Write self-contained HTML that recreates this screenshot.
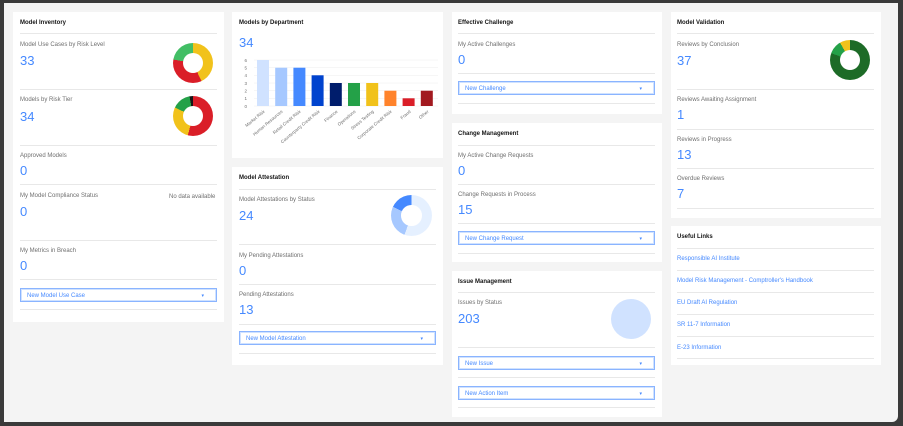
<!DOCTYPE html>
<html><head><meta charset="utf-8"><style>
*{margin:0;padding:0;box-sizing:border-box}
body{width:903px;height:426px;background:#3a3a3a;font-family:"Liberation Sans",sans-serif;position:relative;overflow:hidden}
#bg{position:absolute;left:4px;top:3px;width:894px;height:419px;background:#f4f4f4;border-radius:0 0 6px 0}
.c{position:absolute;background:#fff}
.t{position:absolute;font-size:6px;font-weight:bold;color:#161616}
.l{position:absolute;font-size:6px;color:#6f6f6f}
.n{position:absolute;font-size:13px;color:#4589ff;line-height:13px}
.h{position:absolute;height:1px;background:#e8e8e8}
.b{position:absolute;height:14px;border:1px solid #8ab4ff;box-shadow:0 0 0 1px #d0e2ff inset;font-size:6px;color:#4589ff;padding:4px 0 0 16px;line-height:6px}
.b:after{content:"▾";position:absolute;right:12px;top:4px;font-size:5px}
.d{position:absolute;border-radius:50%}
.d:after{content:"";position:absolute;left:25%;top:25%;width:50%;height:50%;border-radius:50%;background:#fff}
.a{position:absolute;font-size:6px;color:#4589ff}
</style></head><body>
<div id="bg"></div>

<!-- col1 -->
<div class="c" style="left:13px;top:12px;width:211px;height:310px"></div>
<div class="t" style="left:20px;top:20px">Model Inventory</div>
<div class="h" style="left:20px;top:33px;width:197px"></div>
<div class="l" style="left:20px;top:42px">Model Use Cases by Risk Level</div>
<div class="n" style="left:20px;top:54px">33</div>
<div class="d" style="left:173px;top:43px;width:40px;height:40px;background:conic-gradient(#f1c21b 0 155deg,#da1e28 155deg 280deg,#42be65 280deg 360deg)"></div>
<div class="h" style="left:20px;top:89px;width:197px"></div>
<div class="l" style="left:20px;top:97px">Models by Risk Tier</div>
<div class="n" style="left:20px;top:110px">34</div>
<div class="d" style="left:173px;top:96px;width:40px;height:40px;background:conic-gradient(#da1e28 0 195deg,#f1c21b 195deg 295deg,#24a148 295deg 350deg,#161616 350deg 360deg)"></div>
<div class="h" style="left:20px;top:145px;width:197px"></div>
<div class="l" style="left:20px;top:153px">Approved Models</div>
<div class="n" style="left:20px;top:164px">0</div>
<div class="h" style="left:20px;top:184px;width:197px"></div>
<div class="l" style="left:20px;top:193px">My Model Compliance Status</div>
<div class="l" style="left:169px;top:194px">No data available</div>
<div class="n" style="left:20px;top:205px">0</div>
<div class="h" style="left:20px;top:240px;width:197px"></div>
<div class="l" style="left:20px;top:248px">My Metrics in Breach</div>
<div class="n" style="left:20px;top:259px">0</div>
<div class="h" style="left:20px;top:279px;width:197px"></div>
<div class="b" style="left:20px;top:288px;width:197px;padding-left:6px">New Model Use Case</div>
<div class="h" style="left:20px;top:309px;width:197px"></div>

<!-- col2 -->
<div class="c" style="left:232px;top:12px;width:211px;height:146px"></div>
<div class="t" style="left:239px;top:20px">Models by Department</div>
<div class="n" style="left:239px;top:36px">34</div>
<svg style="position:absolute;left:232px;top:55px" width="211" height="100" font-family="Liberation Sans" font-size="4.5" fill="#6f6f6f">
<g stroke="#eee" stroke-width="0.5">
<line x1="22" y1="5" x2="206" y2="5"/><line x1="22" y1="12.7" x2="206" y2="12.7"/><line x1="22" y1="20.3" x2="206" y2="20.3"/><line x1="22" y1="28" x2="206" y2="28"/><line x1="22" y1="35.7" x2="206" y2="35.7"/><line x1="22" y1="43.3" x2="206" y2="43.3"/><line x1="22" y1="51" x2="206" y2="51"/>
</g>
<g text-anchor="end"><text x="15" y="7">6</text><text x="15" y="14.5">5</text><text x="15" y="22">4</text><text x="15" y="30">3</text><text x="15" y="37.5">2</text><text x="15" y="45">1</text><text x="15" y="53">0</text></g>
<rect x="25" y="5" width="12" height="46" fill="#d0e2ff"/>
<rect x="43.2" y="12.7" width="12" height="38.3" fill="#a6c8ff"/>
<rect x="61.4" y="12.7" width="12" height="38.3" fill="#4589ff"/>
<rect x="79.6" y="20.3" width="12" height="30.7" fill="#0043ce"/>
<rect x="97.8" y="28" width="12" height="23" fill="#001d6c"/>
<rect x="116" y="28" width="12" height="23" fill="#24a148"/>
<rect x="134.2" y="28" width="12" height="23" fill="#f1c21b"/>
<rect x="152.4" y="35.7" width="12" height="15.3" fill="#ff832b"/>
<rect x="170.6" y="43.3" width="12" height="7.7" fill="#da1e28"/>
<rect x="188.8" y="35.7" width="12" height="15.3" fill="#a2191f"/>
<g text-anchor="end">
<text transform="translate(33,57) rotate(-40)">Market Risk</text>
<text transform="translate(51,57) rotate(-40)">Human Resources</text>
<text transform="translate(69,57) rotate(-40)">Retail Credit Risk</text>
<text transform="translate(88,57) rotate(-40)">Counterparty Credit Risk</text>
<text transform="translate(106,57) rotate(-40)">Finance</text>
<text transform="translate(124,57) rotate(-40)">Operations</text>
<text transform="translate(142,57) rotate(-40)">Stress Testing</text>
<text transform="translate(160,57) rotate(-40)">Corporate Credit Risk</text>
<text transform="translate(179,57) rotate(-40)">Fraud</text>
<text transform="translate(197,57) rotate(-40)">Other</text>
</g></svg>

<div class="c" style="left:232px;top:167px;width:211px;height:198px"></div>
<div class="t" style="left:239px;top:175px">Model Attestation</div>
<div class="h" style="left:239px;top:189px;width:197px"></div>
<div class="l" style="left:239px;top:197px">Model Attestations by Status</div>
<div class="n" style="left:239px;top:209px">24</div>
<div class="d" style="left:391px;top:195px;width:41px;height:41px;background:conic-gradient(#e5f0ff 0 200deg,#a6c8ff 200deg 295deg,#4589ff 295deg 360deg)"></div>
<div class="h" style="left:239px;top:244px;width:197px"></div>
<div class="l" style="left:239px;top:253px">My Pending Attestations</div>
<div class="n" style="left:239px;top:264px">0</div>
<div class="h" style="left:239px;top:284px;width:197px"></div>
<div class="l" style="left:239px;top:292px">Pending Attestations</div>
<div class="n" style="left:239px;top:303px">13</div>
<div class="h" style="left:239px;top:324px;width:197px"></div>
<div class="b" style="left:239px;top:331px;width:197px;padding-left:6px">New Model Attestation</div>
<div class="h" style="left:239px;top:353px;width:197px"></div>

<!-- col3 -->
<div class="c" style="left:452px;top:12px;width:210px;height:102px"></div>
<div class="t" style="left:458px;top:20px">Effective Challenge</div>
<div class="h" style="left:458px;top:33px;width:197px"></div>
<div class="l" style="left:458px;top:42px">My Active Challenges</div>
<div class="n" style="left:458px;top:53px">0</div>
<div class="h" style="left:458px;top:73px;width:197px"></div>
<div class="b" style="left:458px;top:81px;width:197px;padding-left:6px">New Challenge</div>
<div class="h" style="left:458px;top:103px;width:197px"></div>

<div class="c" style="left:452px;top:123px;width:210px;height:139px"></div>
<div class="t" style="left:458px;top:131px">Change Management</div>
<div class="h" style="left:458px;top:145px;width:197px"></div>
<div class="l" style="left:458px;top:153px">My Active Change Requests</div>
<div class="n" style="left:458px;top:164px">0</div>
<div class="h" style="left:458px;top:184px;width:197px"></div>
<div class="l" style="left:458px;top:192px">Change Requests in Process</div>
<div class="n" style="left:458px;top:203px">15</div>
<div class="h" style="left:458px;top:223px;width:197px"></div>
<div class="b" style="left:458px;top:231px;width:197px;padding-left:6px">New Change Request</div>
<div class="h" style="left:458px;top:253px;width:197px"></div>

<div class="c" style="left:452px;top:271px;width:210px;height:146px"></div>
<div class="t" style="left:458px;top:279px">Issue Management</div>
<div class="h" style="left:458px;top:292px;width:197px"></div>
<div class="l" style="left:458px;top:300px">Issues by Status</div>
<div class="n" style="left:458px;top:312px">203</div>
<div style="position:absolute;left:611px;top:299px;width:40px;height:40px;border-radius:50%;background:#d0e2ff"></div>
<div class="h" style="left:458px;top:347px;width:197px"></div>
<div class="b" style="left:458px;top:356px;width:197px;padding-left:6px">New Issue</div>
<div class="h" style="left:458px;top:377px;width:197px"></div>
<div class="b" style="left:458px;top:386px;width:197px;padding-left:6px">New Action Item</div>
<div class="h" style="left:458px;top:407px;width:197px"></div>

<!-- col4 -->
<div class="c" style="left:671px;top:12px;width:210px;height:206px"></div>
<div class="t" style="left:677px;top:20px">Model Validation</div>
<div class="h" style="left:677px;top:33px;width:197px"></div>
<div class="l" style="left:677px;top:42px">Reviews by Conclusion</div>
<div class="n" style="left:677px;top:54px">37</div>
<div class="d" style="left:830px;top:40px;width:40px;height:40px;background:conic-gradient(#1d6b27 0 290deg,#24a148 290deg 330deg,#f1c21b 330deg 360deg)"></div>
<div class="h" style="left:677px;top:89px;width:197px"></div>
<div class="l" style="left:677px;top:97px">Reviews Awaiting Assignment</div>
<div class="n" style="left:677px;top:108px">1</div>
<div class="h" style="left:677px;top:129px;width:197px"></div>
<div class="l" style="left:677px;top:137px">Reviews in Progress</div>
<div class="n" style="left:677px;top:148px">13</div>
<div class="h" style="left:677px;top:168px;width:197px"></div>
<div class="l" style="left:677px;top:176px">Overdue Reviews</div>
<div class="n" style="left:677px;top:187px">7</div>
<div class="h" style="left:677px;top:208px;width:197px"></div>

<div class="c" style="left:671px;top:226px;width:210px;height:139px"></div>
<div class="t" style="left:677px;top:234px">Useful Links</div>
<div class="h" style="left:677px;top:248px;width:197px"></div>
<div class="a" style="left:677px;top:256px">Responsible AI Institute</div>
<div class="h" style="left:677px;top:270px;width:197px"></div>
<div class="a" style="left:677px;top:278px">Model Risk Management - Comptroller's Handbook</div>
<div class="h" style="left:677px;top:292px;width:197px"></div>
<div class="a" style="left:677px;top:300px">EU Draft AI Regulation</div>
<div class="h" style="left:677px;top:314px;width:197px"></div>
<div class="a" style="left:677px;top:322px">SR 11-7 Information</div>
<div class="h" style="left:677px;top:336px;width:197px"></div>
<div class="a" style="left:677px;top:345px">E-23 Information</div>
<div class="h" style="left:677px;top:358px;width:197px"></div>
</body></html>
